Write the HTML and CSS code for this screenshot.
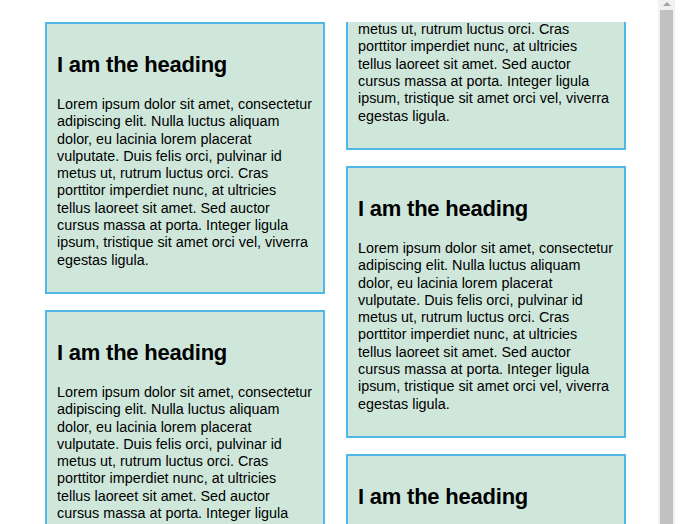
FILE: index.html
```html
<!DOCTYPE html>
<html lang="en">
<head>
<meta charset="utf-8">
<title>Cards</title>
<link rel="stylesheet" href="styles.css">
</head>
<body>
  <div class="viewport">
    <div class="board">
      <div class="col">
        <div class="card">
          <h2>I am the heading</h2>
          <p>Lorem ipsum dolor sit amet, consectetur adipiscing elit. Nulla luctus aliquam dolor, eu lacinia lorem placerat vulputate. Duis felis orci, pulvinar id metus ut, rutrum luctus orci. Cras porttitor imperdiet nunc, at ultricies tellus laoreet sit amet. Sed auctor cursus massa at porta. Integer ligula ipsum, tristique sit amet orci vel, viverra egestas ligula.</p>
        </div>
        <div class="card">
          <h2>I am the heading</h2>
          <p>Lorem ipsum dolor sit amet, consectetur adipiscing elit. Nulla luctus aliquam dolor, eu lacinia lorem placerat vulputate. Duis felis orci, pulvinar id metus ut, rutrum luctus orci. Cras porttitor imperdiet nunc, at ultricies tellus laoreet sit amet. Sed auctor cursus massa at porta. Integer ligula ipsum, tristique sit amet orci vel, viverra egestas ligula.</p>
        </div>
      </div>
      <div class="col col-offset">
        <div class="card">
          <h2>I am the heading</h2>
          <p>Lorem ipsum dolor sit amet, consectetur adipiscing elit. Nulla luctus aliquam dolor, eu lacinia lorem placerat vulputate. Duis felis orci, pulvinar id metus ut, rutrum luctus orci. Cras porttitor imperdiet nunc, at ultricies tellus laoreet sit amet. Sed auctor cursus massa at porta. Integer ligula ipsum, tristique sit amet orci vel, viverra egestas ligula.</p>
        </div>
        <div class="card">
          <h2>I am the heading</h2>
          <p>Lorem ipsum dolor sit amet, consectetur adipiscing elit. Nulla luctus aliquam dolor, eu lacinia lorem placerat vulputate. Duis felis orci, pulvinar id metus ut, rutrum luctus orci. Cras porttitor imperdiet nunc, at ultricies tellus laoreet sit amet. Sed auctor cursus massa at porta. Integer ligula ipsum, tristique sit amet orci vel, viverra egestas ligula.</p>
        </div>
        <div class="card">
          <h2>I am the heading</h2>
          <p>Lorem ipsum dolor sit amet, consectetur adipiscing elit. Nulla luctus aliquam dolor, eu lacinia lorem placerat vulputate. Duis felis orci, pulvinar id metus ut, rutrum luctus orci. Cras porttitor imperdiet nunc, at ultricies tellus laoreet sit amet. Sed auctor cursus massa at porta. Integer ligula ipsum, tristique sit amet orci vel, viverra egestas ligula.</p>
        </div>
      </div>
    </div>
  </div>
  <div class="scrollbar">
    <div class="scroll-arrow"><span class="triangle"></span></div>
    <div class="scroll-thumb"></div>
  </div>
</body>
</html>
```
FILE: styles.css
```css
html, body {
  margin: 0;
  padding: 0;
  background: #ffffff;
}

body {
  width: 686px;
  height: 524px;
  overflow: hidden;
  display: flex;
  font-family: "Liberation Sans", Arial, sans-serif;
  color: #000000;
}

.viewport {
  width: 658px;
  flex: none;
  padding-top: 22px;
  box-sizing: border-box;
  height: 524px;
}

.board {
  height: 502px;
  overflow: hidden;
  display: flex;
  align-items: flex-start;
  gap: 21px;
  padding-left: 45px;
}

.col {
  width: 280px;
  flex: none;
  display: flex;
  flex-direction: column;
  gap: 16px;
}

.col-offset {
  margin-top: -144px;
}

.card {
  box-sizing: border-box;
  border: 2px solid #4fb8e6;
  background: #cfe7db;
  padding: 10px;
}

.card h2 {
  font-size: 22px;
  font-weight: bold;
  letter-spacing: -0.22px;
  margin: 18px 0 19px;
  line-height: 25px;
}

.card p {
  font-size: 14.35px;
  line-height: 17.3px;
  margin: 0 0 13px;
}

.scrollbar {
  width: 17px;
  flex: none;
  height: 524px;
  background: #f1f1f1;
  display: flex;
  flex-direction: column;
}

.scroll-arrow {
  height: 10px;
  display: flex;
  justify-content: center;
  padding-top: 2px;
  box-sizing: border-box;
}

.triangle {
  width: 0;
  height: 0;
  border-left: 4px solid transparent;
  border-right: 4px solid transparent;
  border-bottom: 4px solid #a3a3a3;
}

.scroll-thumb {
  flex: 1;
  margin: 0 2px;
  background: #c1c1c1;
}
```
